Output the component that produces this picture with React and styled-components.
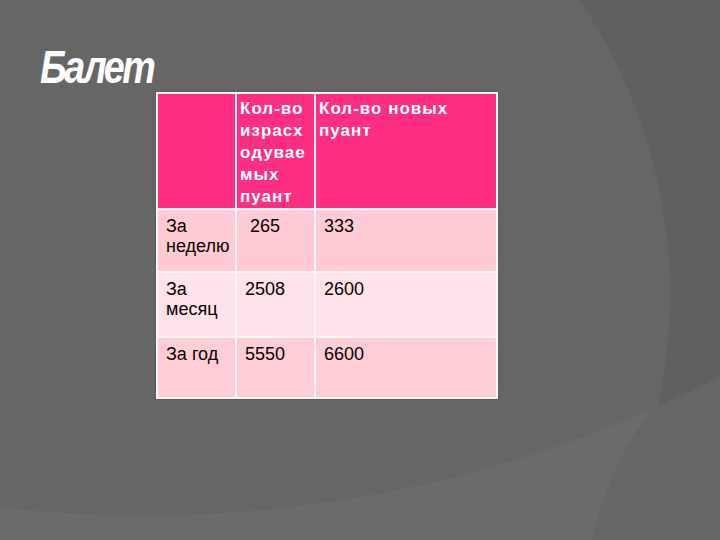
import React from "react";
import styled, { createGlobalStyle } from "styled-components";

const GlobalStyle = createGlobalStyle`
  html, body {
    margin: 0;
    padding: 0;
    background: #666666;
  }
`;

const rows = [
  { label: "За неделю", used: "\u00a0265", fresh: "333", bg: "#ffccd5", height: 61 },
  { label: "За месяц", used: "2508", fresh: "2600", bg: "#ffe3ea", height: 63 },
  { label: "За год", used: "5550", fresh: "6600", bg: "#ffcdd6", height: 59 },
];

const Backdrop = () => (
  <BackdropSvg viewBox="0 0 720 540" preserveAspectRatio="none">
    <defs>
      <clipPath id="upper">
        <circle cx="145" cy="-748" r="1263" />
      </clipPath>
    </defs>
    <rect width="720" height="540" fill="#6b6b6b" />
    <circle cx="900" cy="600" r="313" fill="#666666" />
    <g clipPath="url(#upper)">
      <rect width="720" height="540" fill="#606060" />
      <circle cx="145" cy="295" r="525" fill="#666666" />
    </g>
  </BackdropSvg>
);

const App = () => {
  return (
    <>
      <GlobalStyle />
      <Slide>
        <Backdrop />
        <Content>
          <Title>Балет</Title>
          <Frame>
            <Table>
              <colgroup>
                <col style={{ width: 77 }} />
                <col style={{ width: 77 }} />
                <col style={{ width: 180 }} />
              </colgroup>
              <tbody>
                <Row $bg="#fe2e82" $h={113}>
                  <HeadCell></HeadCell>
                  <HeadCell>
                    Кол-во
                    <br />
                    израсх
                    <br />
                    одувае
                    <br />
                    мых
                    <br />
                    пуант
                  </HeadCell>
                  <HeadCell>
                    Кол-во новых
                    <br />
                    пуант
                  </HeadCell>
                </Row>
                {rows.map((r) => (
                  <Row key={r.label} $bg={r.bg} $h={r.height}>
                    <Cell>{r.label}</Cell>
                    <Cell>{r.used}</Cell>
                    <Cell>{r.fresh}</Cell>
                  </Row>
                ))}
              </tbody>
            </Table>
          </Frame>
        </Content>
      </Slide>
    </>
  );
};

export default App;

const Slide = styled.div`
  position: relative;
  width: 720px;
  height: 540px;
  overflow: hidden;
  background: #666666;
`;

const BackdropSvg = styled.svg`
  position: absolute;
  inset: 0;
  width: 720px;
  height: 540px;
  display: block;
`;

const Content = styled.div`
  position: relative;
  display: flex;
  flex-direction: column;
  align-items: flex-start;
  padding-top: 45px;
`;

const Title = styled.h1`
  margin: 0 0 2px 40px;
  font-family: "Liberation Sans", Arial, sans-serif;
  font-weight: 700;
  font-style: italic;
  font-size: 46px;
  line-height: 44px;
  letter-spacing: -3px;
  color: #ffffff;
  transform: scaleX(0.82);
  transform-origin: left center;
`;

const Frame = styled.div`
  margin-left: 155px;
  border: 1px solid #57605b;
`;

const Table = styled.table`
  table-layout: fixed;
  border-collapse: separate;
  border-spacing: 2px;
  background: #fff4f6;
  font-family: "Liberation Sans", Arial, sans-serif;
`;

const Row = styled.tr`
  height: ${(p) => p.$h}px;
  background: ${(p) => p.$bg};
`;

const HeadCell = styled.td`
  vertical-align: top;
  padding: 4px 0 0 3px;
  font-size: 17px;
  line-height: 22px;
  font-weight: 700;
  letter-spacing: 1px;
  color: #ffffff;
  white-space: nowrap;
`;

const Cell = styled.td`
  vertical-align: top;
  padding: 6px 2px 0 8px;
  font-size: 18px;
  line-height: 20px;
  color: #0a0000;
`;
